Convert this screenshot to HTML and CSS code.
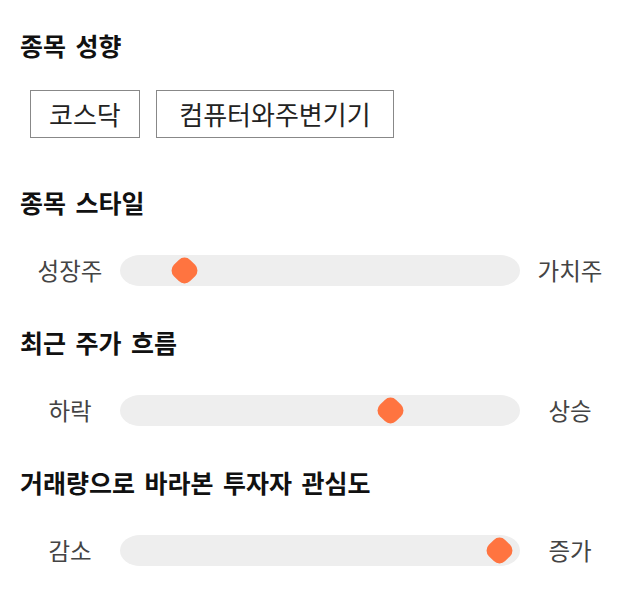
FILE: index.html
```html
<!DOCTYPE html>
<html lang="ko">
<head>
<meta charset="utf-8">
<link rel="stylesheet" href="styles.css">
</head>
<body>
<div class="page">
  <section class="sec sec-tags">
    <h2 class="title">종목 성향</h2>
    <div class="tags">
      <span class="tag">코스닥</span>
      <span class="tag tag-wide">컴퓨터와주변기기</span>
    </div>
  </section>
  <section class="sec">
    <h2 class="title">종목 스타일</h2>
    <div class="slider-row">
      <span class="lbl">성장주</span>
      <div class="track"><span class="thumb" style="--v:0.135"></span></div>
      <span class="lbl">가치주</span>
    </div>
  </section>
  <section class="sec">
    <h2 class="title">최근 주가 흐름</h2>
    <div class="slider-row">
      <span class="lbl">하락</span>
      <div class="track"><span class="thumb" style="--v:0.69"></span></div>
      <span class="lbl">상승</span>
    </div>
  </section>
  <section class="sec">
    <h2 class="title">거래량으로 바라본 투자자 관심도</h2>
    <div class="slider-row">
      <span class="lbl">감소</span>
      <div class="track"><span class="thumb" style="--v:0.984"></span></div>
      <span class="lbl">증가</span>
    </div>
  </section>
</div>
</body>
</html>
```

FILE: styles.css
```css
html, body {
  margin: 0;
  padding: 0;
  background: #ffffff;
}
body {
  font-family: "Noto Sans CJK KR", "Noto Sans", sans-serif;
  color: #111;
}
.page {
  padding: 28px 20px 0 20px;
  display: flex;
  flex-direction: column;
}
.title {
  margin: 0;
  font-size: 25px;
  font-weight: 700;
  line-height: 34px;
  word-spacing: 2.5px;
  color: #111;
}
.sec {
  margin-bottom: 38px;
}
.sec.sec-tags {
  margin-bottom: 47px;
}
.tags {
  display: flex;
  gap: 16px;
  margin: 28px 0 0 10px;
}
.tag {
  display: inline-block;
  border: 1px solid #888;
  padding: 0 18px;
  height: 46px;
  line-height: 46px;
  font-size: 26px;
  color: #222;
}
.tag.tag-wide {
  padding: 0 22.5px;
}
.slider-row {
  display: flex;
  align-items: center;
  margin-top: 34px;
}
.lbl {
  width: 100px;
  flex: none;
  text-align: center;
  font-size: 23.5px;
  line-height: 34px;
  color: #444;
}
.track {
  position: relative;
  flex: 1;
  height: 31px;
  background: #eeeeee;
  border-radius: 20px / 15.5px;
}
.thumb {
  position: absolute;
  top: 50%;
  left: calc(15px + (100% - 30px) * var(--v));
  width: 23px;
  height: 23px;
  margin: -11.5px 0 0 -11.5px;
  background: #ff7440;
  border-radius: 8px;
  transform: rotate(45deg);
}
```
